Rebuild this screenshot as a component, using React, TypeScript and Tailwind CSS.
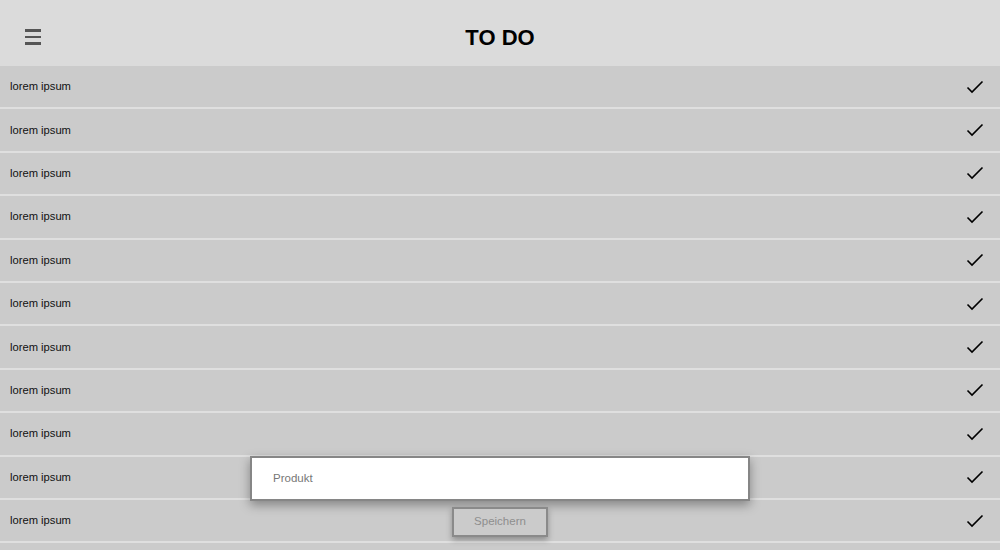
import React from "react";

const rows = Array.from({ length: 11 }, (_, i) => i);

function Check() {
  return (
    <svg width="18" height="14" viewBox="0 0 18 14" fill="none">
      <path d="M1.5 7.5 L6 12 L16.5 1.5" stroke="#000" strokeWidth="1.6" />
    </svg>
  );
}

export default function App() {
  return (
    <div
      className="relative w-[1000px] h-[550px] overflow-hidden bg-[#cbcbcb]"
      style={{ fontFamily: '"Liberation Sans", Arial, sans-serif' }}
    >
      <header className="h-[66px] bg-[#dbdbdb] flex items-center relative">
        <div className="absolute left-[25px] top-[29px] flex flex-col gap-[4px]">
          <span className="block w-[16px] h-[2.5px] bg-[#555]" />
          <span className="block w-[16px] h-[2.5px] bg-[#555]" />
          <span className="block w-[16px] h-[2.5px] bg-[#555]" />
        </div>
        <h1 className="w-full text-center text-[22px] font-bold text-black pt-[8px]">TO DO</h1>
      </header>
      <ul>
        {rows.map((i) => (
          <li
            key={i}
            className="h-[43.4px] border-b-2 border-[#dfdfdf] flex items-center justify-between pl-[10px] pr-[16px]"
          >
            <span className="text-[11.2px] text-[#111]">lorem ipsum</span>
            <Check />
          </li>
        ))}
      </ul>
      <div className="absolute left-[250px] top-[456px] w-[500px] h-[45px] bg-white border-2 border-[#868686] shadow-[0_4px_10px_rgba(0,0,0,0.35)] flex items-center pl-[21px]">
        <span className="text-[11.5px] text-[#777]">Produkt</span>
      </div>
      <button className="absolute left-[452px] top-[507px] w-[96px] h-[30px] bg-[#cbcbcb] border-2 border-[#8a8a8a] shadow-[0_3px_6px_rgba(0,0,0,0.3)] text-[11.5px] text-[#8e8e8e]">
        Speichern
      </button>
    </div>
  );
}
